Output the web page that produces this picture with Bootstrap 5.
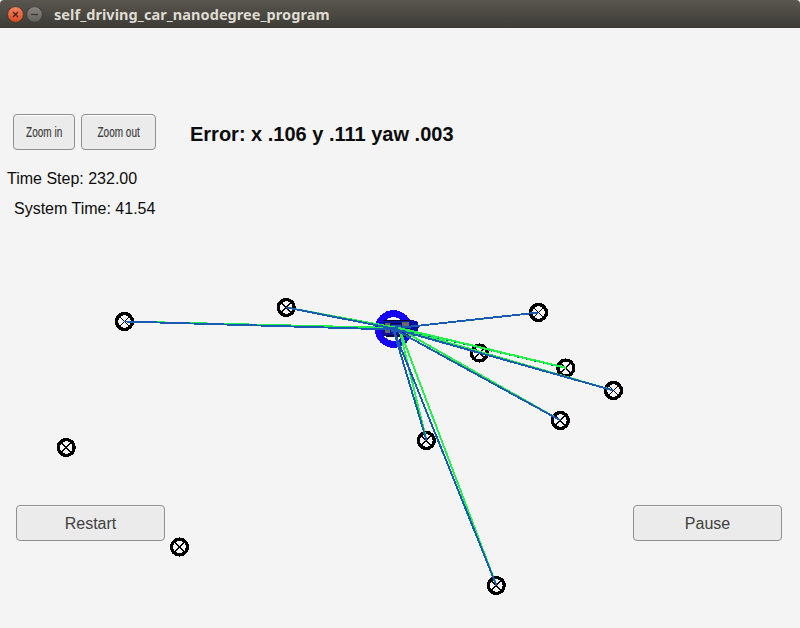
<!DOCTYPE html>
<html lang="en">
<head>
<meta charset="utf-8">
<title>self_driving_car_nanodegree_program</title>
<meta name="viewport" content="width=device-width, initial-scale=1">
<link href="https://cdn.jsdelivr.net/npm/bootstrap@5.3.0/dist/css/bootstrap.min.css" rel="stylesheet">
<style>
body{width:800px;height:628px;background:#f4f4f4;font-family:"Liberation Sans",Arial,sans-serif;color:#0c0c0c}
.titlebar{height:28px;padding-left:7px;background:linear-gradient(#595750 0,#57544c 2px,#3d3c37 27px,#3a3935);border-radius:4px 4px 0 0;color:#dfdbd2}
.title-text{font:bold 14.5px/26px "Noto Sans","Open Sans",sans-serif;letter-spacing:.07px;margin-left:11px;white-space:nowrap}
.scene{height:600px}
.map{z-index:0;pointer-events:none}
.controls{z-index:1;padding-top:86px}
.sim-btn{--bs-btn-bg:#ebebeb;--bs-btn-color:#404040;--bs-btn-border-color:#909090;--bs-btn-border-radius:4px;--bs-btn-padding-x:0;--bs-btn-padding-y:0;--bs-btn-font-size:16px;--bs-btn-hover-bg:#e2e2e2;--bs-btn-hover-color:#303030;width:149px;height:36px;box-shadow:inset 0 1px #fafafa}
.squeeze{display:inline-block;font-size:14.5px;transform:scale(.69,1.04);-webkit-text-stroke:.2px;margin:0 -10px;white-space:nowrap;padding-top:2px}
.zoom-in{width:62px}.zoom-out{width:75px;margin-left:6px}
.top-row{padding-left:13px;height:36px}
.err{font-size:20px;font-weight:700;line-height:36px;margin-left:34px;padding-top:4px}
.stat{font-size:16px;line-height:30px;white-space:nowrap}
.stat-indent{padding-left:7px}
.stats{padding:14px 0 0 7px}
.bottom-row{margin:281px 18px 0 16px}
.bottom-row span{display:inline-block;padding-top:2px}
</style>
<script src="https://cdn.jsdelivr.net/npm/bootstrap@5.3.0/dist/js/bootstrap.bundle.min.js"></script>
</head>
<body class="overflow-hidden">
<header class="titlebar d-flex align-items-center">
<svg width="36" height="18" viewBox="7 5 36 18" aria-hidden="true">
<defs><linearGradient id="o" x2="0" y2="1"><stop stop-color="#f58461"/><stop offset="1" stop-color="#dc4a1c"/></linearGradient><linearGradient id="g" x2="0" y2="1"><stop stop-color="#888680"/><stop offset="1" stop-color="#62605a"/></linearGradient></defs>
<circle cx="15.5" cy="14.500" r="7.900" fill="url(#o)" stroke="#35332e" stroke-width=".8"/><path d="M13 12l5 5M18 12l-5 5" stroke="#45271d" stroke-width="1.400"/>
<circle cx="34.5" cy="14.500" r="7.900" fill="url(#g)" stroke="#35332e" stroke-width=".8"/><path d="M31 14.500h7" stroke="#383731" stroke-width="1.200"/>
</svg>
<span class="title-text">self_driving_car_nanodegree_program</span>
</header>
<main class="scene position-relative">
<svg class="map position-absolute top-0 start-0" width="800" height="600" viewBox="0 28 800 600" shape-rendering="crispEdges" fill="none">
<defs><g id="lm"><circle r="7.950" stroke="#000" stroke-width="3.300"/><path d="M-5-5L5 5M5-5L-5 5" stroke="#000" stroke-width="1.300"/></g></defs>
<g><use href="#lm" x="124.500" y="321.500"/><use href="#lm" x="286.200" y="307.500"/><use href="#lm" x="538.500" y="312.500"/><use href="#lm" x="479.400" y="353"/><use href="#lm" x="565.800" y="368"/><use href="#lm" x="613.500" y="390.500"/><use href="#lm" x="560.400" y="420.500"/><use href="#lm" x="426.400" y="440.500"/><use href="#lm" x="496.300" y="585.500"/><use href="#lm" x="66.200" y="447.500"/><use href="#lm" x="179.500" y="547"/></g>
<path d="M384 320h29l5 2 1 5-2 6-5 3h-28z" fill="#0c0cb8"/>
<circle cx="393.500" cy="329" r="15.300" stroke="#1605f5" stroke-width="7"/>
<path d="M382 321h31l5 3v8l-5 4h-31z" fill="#0c12a0"/>
<path d="M385 323h5v10h-5zM402 322h7v6h-7z" fill="#67686e"/>
<path d="M383 320.500h28M386 336h24M391 323.500h10" stroke="#080b31" stroke-width="1.200"/>
<path d="M391 325h10v7h-10z" fill="#225bb5"/>
<g stroke="#20f246" stroke-width="1.900"><path d="M398 328L124.500 321.500M398 328L286.500 307.500M398 328L538.500 312.500M398 328L479.500 352M398 328L566 368M398 328L613.500 390.500M398 328L560.500 420.500M399 328L426.500 440.500M399 328L496.500 585.500"/></g>
<g stroke="#195bb4" stroke-width="1.900"><path d="M393 329.500L124.500 321.500M393 328.500L286.500 307.500M393 328.500L538.500 312.500M393 328.500L479.500 353M393 328.500L613.500 390.500M393 328.500L560.500 420.500M393 328.500L426.500 440.500M393 328.500L496.500 585.500"/></g>
<path d="M393 328L560 367" stroke="#195bb4" stroke-dasharray="3 6"/>
<path d="M398 327.700L566 367.700" stroke="#20f246" stroke-width="1.900"/>
</svg>
<div class="controls position-relative">
<div class="top-row d-flex align-items-center">
<button class="btn sim-btn zoom-in"><span class="squeeze">Zoom in</span></button>
<button class="btn sim-btn zoom-out"><span class="squeeze">Zoom out</span></button>
<div class="err text-nowrap">Error: x .106 y .111 yaw .003</div>
</div>
<div class="stats"><div class="stat">Time Step: 232.00</div><div class="stat stat-indent">System Time: 41.54</div></div>
<div class="bottom-row d-flex justify-content-between"><button class="btn sim-btn"><span>Restart</span></button><button class="btn sim-btn"><span>Pause</span></button></div>
</div>
</main>
</body>
</html>
